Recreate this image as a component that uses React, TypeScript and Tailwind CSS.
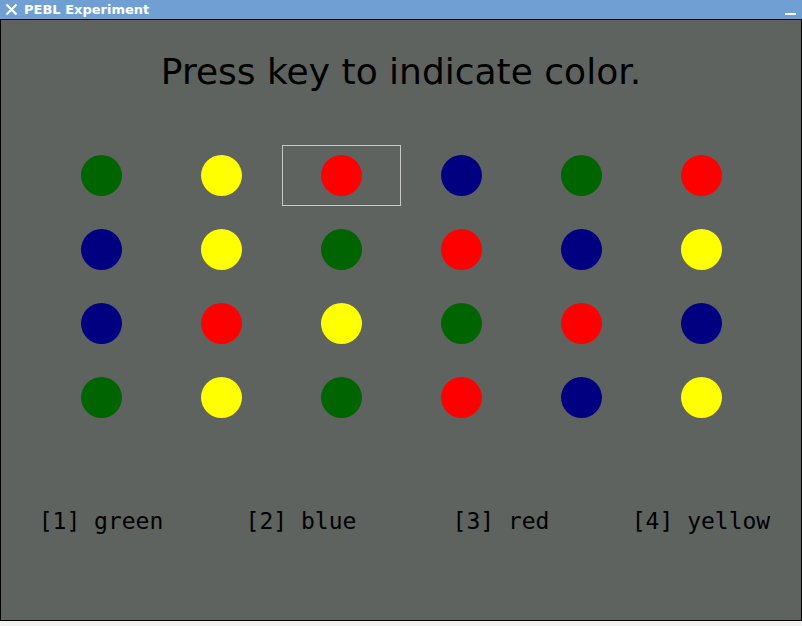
import React from "react";

const G = "bg-[#006400]";
const B = "bg-[#000080]";
const R = "bg-[#ff0000]";
const Y = "bg-[#ffff00]";

const rows: string[][] = [
  [G, Y, R, B, G, R],
  [B, Y, G, R, B, Y],
  [B, R, Y, G, R, B],
  [G, Y, G, R, B, Y],
];

export default function App() {
  return (
    <div className="w-[802px] h-[626px] flex flex-col bg-[#f2f2f2] overflow-hidden">
      <div className="h-[19px] bg-[#6f9fd3] flex items-center relative">
        <svg width="13" height="13" viewBox="0 0 13 13" className="ml-[5px]">
          <path d="M1.5 1.5 L11.5 11.5 M11.5 1.5 L1.5 11.5" stroke="#fff" strokeWidth="2.2" />
        </svg>
        <span
          className="ml-[6px] text-white text-[13px] font-bold leading-none"
          style={{ fontFamily: '"DejaVu Sans", sans-serif' }}
        >
          PEBL Experiment
        </span>
        <div className="absolute right-[6px] top-[13px] w-[11px] h-[2px] bg-white" />
      </div>
      <div className="h-px bg-black" />
      <div className="h-[601px] bg-[#5e6360] border-x border-b border-black flex flex-col items-center">
        <div
          className="mt-[28px] h-[48px] leading-[48px] text-[36px] text-black"
          style={{ fontFamily: '"DejaVu Sans", sans-serif' }}
        >
          Press key to indicate color.
        </div>
        <div className="mt-[42px] grid grid-cols-6 w-[720px]">
          {rows.map((row, ri) =>
            row.map((c, ci) => (
              <div key={`${ri}-${ci}`} className="h-[74px] flex items-center justify-center">
                <div
                  className={
                    ri === 0 && ci === 2
                      ? "w-[121px] h-[61px] ml-px border border-[#c8c8c4] flex items-center justify-center"
                      : "w-[121px] h-[61px] ml-px flex items-center justify-center"
                  }
                >
                  <div className={`w-[41px] h-[41px] rounded-full ${c}`} />
                </div>
              </div>
            ))
          )}
        </div>
        <div
          className="mt-[72px] grid grid-cols-4 w-[800px] text-[23px] text-black leading-[30px]"
          style={{ fontFamily: '"DejaVu Sans Mono", monospace' }}
        >
          {["[1] green", "[2] blue", "[3] red", "[4] yellow"].map((t) => (
            <div key={t} className="text-center whitespace-pre">
              {t}
            </div>
          ))}
        </div>
      </div>
    </div>
  );
}
